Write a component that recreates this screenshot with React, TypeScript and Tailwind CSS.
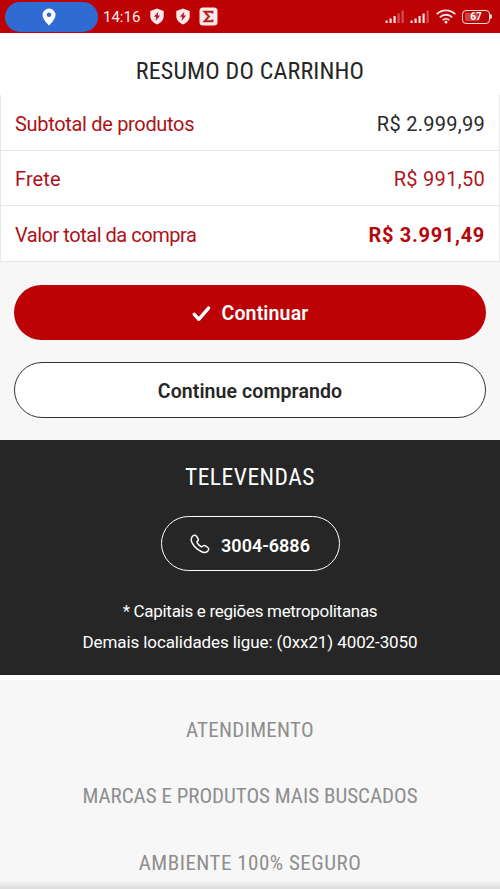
import { ReactNode } from "react";

const SUMMARY = [
  {
    label: "Subtotal de produtos",
    value: "R$ 2.999,99",
    labelClass: "tracking-[-0.32px]",
    valueClass: "tracking-[0.27px] text-[#2a2a2a]",
  },
  {
    label: "Frete",
    value: "R$ 991,50",
    labelClass: "tracking-[0.1px]",
    valueClass: "tracking-[0.3px] text-[#b0151c]",
  },
  {
    label: "Valor total da compra",
    value: "R$ 3.991,49",
    labelClass: "tracking-[-0.47px]",
    valueClass: "tracking-[0.7px] font-bold text-[#b4060b]",
  },
];

function PinIcon() {
  return (
    <svg width="14" height="18" viewBox="0 0 14 18" className="block">
      <path
        d="M7 .5a6.5 6.5 0 0 0-6.5 6.5C.5 11.5 7 17.5 7 17.5S13.5 11.500 13.500 7A6.500 6.500 0 0 0 7 .5z"
        fill="#fff"
      />
      <circle cx="7" cy="6.800" r="2.300" fill="#306bd3" />
    </svg>
  );
}

function ShieldIcon() {
  return (
    <svg width="14" height="17" viewBox="0 0 14 17" className="block">
      <path
        d="M7 .5 13.700 3v5.300c0 3.700-2.700 6.400-6.700 8.200-4-1.800-6.700-4.500-6.700-8.200V3z"
        fill="#fde9e9"
      />
      <path d="M8.300 3.800 3.900 8.700h2.400l-.8 4.200 4.600-5.300H7.600z" fill="#b5102a" />
    </svg>
  );
}

function SigmaIcon() {
  return (
    <svg width="19" height="19" viewBox="0 0 19 19" className="block">
      <rect x=".5" y=".5" width="18" height="18" rx="3.500" fill="#fde9e9" />
      <path
        d="M13.400 6.400V4.700H5.600l4.300 4.800-4.300 4.800h7.800v-1.700"
        fill="none"
        stroke="#b51f24"
        strokeWidth="2"
      />
    </svg>
  );
}

function SignalIcon({ filled }: { filled: number }) {
  const heights = [2.5, 4.5, 7, 9.5, 12.5];
  return (
    <svg width="19" height="13" viewBox="0 0 19 13" className="block">
      {heights.map((h, i) => (
        <rect
          key={h}
          x={0.5 + i * 4}
          y={13 - h}
          width="2.200"
          height={h}
          fill="#fbdcdc"
          opacity={i < filled ? 1 : 0.35}
        />
      ))}
    </svg>
  );
}

function WifiIcon() {
  return (
    <svg width="20" height="15" viewBox="0 0 20 15" className="block">
      <g fill="none" stroke="#fde3e3" strokeWidth="1.800">
        <path d="M.8 5.200a13 13 0 0 1 18.400 0" />
        <path d="M3.800 8.300a8.800 8.800 0 0 1 12.400 0" />
        <path d="M6.700 11.200a4.700 4.700 0 0 1 6.600 0" />
      </g>
      <circle cx="10" cy="13" r="1.500" fill="#fde3e3" />
    </svg>
  );
}

function Battery() {
  return (
    <div className="flex items-center">
      <div className="flex h-[14px] w-[28px] items-center rounded-[4px] border-[1.5px] border-[#fbdada] p-[2px]">
        <div className="flex h-full w-full items-center justify-center rounded-[1px] bg-linear-to-r from-[#cf4040] from-60% to-[#bb0204] to-60% text-[10px] leading-none font-bold text-white">
          67
        </div>
      </div>
      <div className="h-[5px] w-[2px] rounded-r-sm bg-[#fbdada]" />
    </div>
  );
}

function StatusBar() {
  return (
    <header className="flex h-[33px] shrink-0 items-center bg-[#bd0205] pr-[8px] pl-[5px]">
      <div className="flex h-[30px] w-[93px] items-center justify-center rounded-full bg-[#306bd3] pr-[5px]">
        <PinIcon />
      </div>
      <span className="ml-[5px] w-[38px] pt-px text-[15px] leading-none whitespace-nowrap text-[#fdeaea]">
        14:16
      </span>
      <div className="ml-[9px] flex items-center gap-[12px]">
        <ShieldIcon />
        <ShieldIcon />
      </div>
      <div className="ml-[9px]">
        <SigmaIcon />
      </div>
      <div className="ml-auto flex items-center">
        <SignalIcon filled={3} />
        <div className="ml-[6px]">
          <SignalIcon filled={4} />
        </div>
        <div className="ml-[7px]">
          <WifiIcon />
        </div>
        <div className="ml-[6px]">
          <Battery />
        </div>
      </div>
    </header>
  );
}

function CartSummary() {
  return (
    <section className="shrink-0 bg-white">
      <h1 className="flex h-[62px] items-center justify-center pt-[14px] text-[24px] leading-none tracking-[0.17px] text-[#262626] [font-stretch:75%]">
        RESUMO DO CARRINHO
      </h1>
      <dl className="border-x border-[#e6e6e6]">
        {SUMMARY.map((row) => (
          <div
            key={row.label}
            className="flex h-[55.6px] items-center justify-between border-b-[1.5px] border-[#e6e6e6] px-[14px] pt-[3px] text-[20px] leading-none"
          >
            <dt className={`text-[#ad1218] ${row.labelClass}`}>{row.label}</dt>
            <dd className={row.valueClass}>{row.value}</dd>
          </div>
        ))}
      </dl>
    </section>
  );
}

function CheckIcon() {
  return (
    <svg width="19" height="16" viewBox="0 0 19 16" className="block">
      <path
        d="m2.300 8.300 4.500 5 9.700-11.200"
        fill="none"
        stroke="#fff"
        strokeWidth="3.400"
        strokeLinecap="round"
        strokeLinejoin="round"
      />
    </svg>
  );
}

function PhoneIcon() {
  return (
    <svg width="20" height="20" viewBox="0 0 20 20" className="block">
      <path
        d="M2.200 2.600C3.500.9 5.300.6 6.400 2.100l1.500 2.200c.7 1.100.5 2.200-.5 3-.7.6-.5 1.200 0 1.900.9 1.300 2 2.300 3.300 3.200.7.500 1.300.6 1.900-.1.800-1 1.900-1.100 3-.4l2.200 1.600c1.300.9 1.200 2.600-.3 3.900-1.600 1.300-3.900 1.300-6.300.1-4.200-2.100-7.400-5.400-9.300-9.200-1-2.200-.9-4.100.3-5.700z"
        fill="none"
        stroke="#fff"
        strokeWidth="1.500"
      />
    </svg>
  );
}

function FooterLink({ children }: { children: ReactNode }) {
  return (
    <a className="flex h-[66.5px] items-center justify-center text-[21px] leading-none whitespace-nowrap text-[#8e8e8e] [font-stretch:75%]">
      {children}
    </a>
  );
}

export default function App() {
  return (
    <main className="flex h-[889px] w-[500px] flex-col overflow-hidden bg-[#f7f7f7] font-['Roboto','Liberation_Sans',sans-serif] font-normal">
      <StatusBar />
      <CartSummary />

      <div className="flex h-[178.4px] shrink-0 flex-col gap-[22px] px-[14px] pt-[23px]">
        <button className="flex h-[55.5px] w-full items-center justify-center gap-[11px] rounded-full bg-[#bd0205] pt-[3px] text-[19.5px] font-semibold text-white">
          <CheckIcon />
          <span className="tracking-[0.15px]">Continuar</span>
        </button>
        <button className="h-[55.5px] w-full rounded-full border-[1.5px] border-[#333] bg-white pt-[3px] text-[19.5px] font-semibold tracking-[0.1px] text-[#262626]">
          Continue comprando
        </button>
      </div>

      <section className="flex h-[235px] shrink-0 flex-col items-center bg-[#262626] pt-[24px] text-white">
        <h2 className="text-[23.5px] leading-[26px] tracking-[0.5px] [font-stretch:75%]">
          TELEVENDAS
        </h2>
        <a className="mt-[25.6px] flex h-[55.5px] w-[179px] items-center justify-center gap-[11px] rounded-full border-[1.5px] border-white text-[18px] font-semibold">
          <PhoneIcon />
          <span className="pt-[3px]">3004-6886</span>
        </a>
        <p className="mt-[25px] text-center text-[17px] leading-[31px] tracking-[-0.3px]">
          * Capitais e regiões metropolitanas
        </p>
        <p className="text-center text-[17px] leading-[31px] tracking-[-0.1px]">
          Demais localidades ligue: (0xx21) 4002-3050
        </p>
      </section>

      <div className="h-[5px] shrink-0 bg-white" />
      <nav className="h-[200px] shrink-0 pt-[17px]">
        <FooterLink>
          <span className="tracking-[0.3px]">ATENDIMENTO</span>
        </FooterLink>
        <FooterLink>MARCAS E PRODUTOS MAIS BUSCADOS</FooterLink>
        <FooterLink>
          <span className="tracking-[0.5px]">AMBIENTE 100% SEGURO</span>
        </FooterLink>
      </nav>
      <div className="h-[9px] shrink-0 bg-linear-to-b from-[#f7f7f7] to-[#dcdcdc]" />
    </main>
  );
}
